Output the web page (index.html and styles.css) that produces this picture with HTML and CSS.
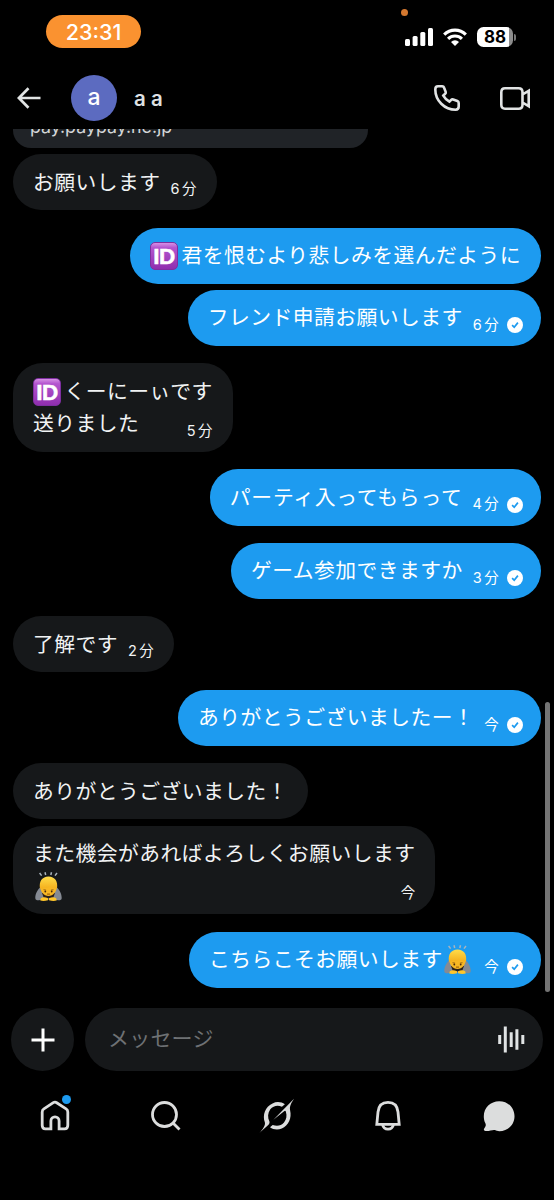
FILE: index.html
```html
<!DOCTYPE html>
<html lang="ja">
<head>
<meta charset="utf-8">
<title>a a</title>
<link rel="stylesheet" href="styles.css">
</head>
<body>
<svg width="0" height="0" class="defs" aria-hidden="true">
  <defs>
    <linearGradient id="hair" x1="0" y1="0" x2="0" y2="1"><stop offset="0" stop-color="#ffdc4a"/><stop offset="1" stop-color="#f5b01d"/></linearGradient>
    <symbol id="check" viewBox="0 0 16 16">
      <circle cx="8" cy="8" r="8" fill="#fff"/>
      <path d="M5.1 8.2 7.2 10.2 10.9 5.6" fill="none" stroke="#1d9bf0" stroke-width="1.7"/>
    </symbol>
    <symbol id="bow" viewBox="0 0 27 30">
      <path d="M4.600 1 6.600 3.600M10 .2 10.700 3M16.500 .2 15.800 3M22 1 20 3.600" stroke="#a9b4bd" stroke-width="1.500" fill="none"/>
      <path d="M6.500 14.500C2.500 17 .300 22 .300 26c0 2 1.500 2.400 3.500 2.300l5-.8h9.400l5 .8c2 .1 3.500-.3 3.500-2.300 0-4-2.200-9-6.200-11.500z" fill="#858a93"/>
      <path d="M7 21h13l-2 5.500H9z" fill="#2d2118"/>
      <path d="M5.200 13.500h16.600c.3 6.300-3.600 10.500-8.300 10.500s-8.600-4.200-8.300-10.500z" fill="#f8b723"/>
      <path d="M5 16.500C3.800 9.500 7.200 4.600 13.500 4.600s9.700 4.900 8.500 11.900c-3 0-5.700-.4-7.200-1.700-2 1.300-6 1.800-9.800 1.700z" fill="url(#hair)"/>
      <path d="M8.500 17.700l2.600.4M18.500 17.700l-2.600.4" stroke="#8a5512" stroke-width=".8"/>
      <circle cx="10.300" cy="19.500" r=".9" fill="#4b2b0b"/><circle cx="16.700" cy="19.500" r=".9" fill="#4b2b0b"/>
      <path d="M12 22.100h3" stroke="#7b3f08" stroke-width=".8"/>
      <path d="M5.800 26.200q3-2 7.200 0v2.100q-4 1-7.700.3zM21.200 26.200q-3-2-7.200 0v2.100q4 1 7.700.3z" fill="#ffc62c"/>
    </symbol>
  </defs>
</svg>
<div class="phone">
  <div class="status">
    <div class="clock">23:31</div>
    <span class="mic-dot"></span>
    <div class="indicators">
      <svg class="signal" viewBox="0 0 28 18"><g fill="#fff"><rect x="0" y="11" width="5" height="7" rx="1.500"/><rect x="7.600" y="8" width="5" height="10" rx="1.500"/><rect x="15.300" y="4" width="5" height="14" rx="1.500"/><rect x="23" y="0" width="5" height="18" rx="1.500"/></g></svg>
      <svg class="wifi" viewBox="0 0 24 18"><g fill="none" stroke="#fff" stroke-width="3.200"><path d="M1.200 6.600a15.400 15.400 0 0 1 21.600 0"/><path d="M5.100 10.800a9.900 9.900 0 0 1 13.800 0"/></g><path d="M8 13.900a5.800 5.800 0 0 1 8 0l-4 4z" fill="#fff"/></svg>
      <div class="battery"><span>88</span></div>
      <i class="battery-tip"></i>
    </div>
  </div>
  <header class="header">
    <svg class="back" viewBox="0 0 24 22"><path d="M11.500 1.200 1.900 11l9.600 9.800M2 11h21.500" fill="none" stroke="#e1e4e4" stroke-width="2.700"/></svg>
    <div class="avatar">a</div>
    <h1 class="name">a a</h1>
    <svg class="call" viewBox="0 0 26 26"><path d="M4 1.300H8.200Q9.600 1.300 10 2.500L11.700 6.900Q12.100 8 11.200 8.800L9.300 10.600Q11.500 14.500 15.400 16.700L17.200 14.900Q18 14.100 19.200 14.500L23.400 16Q24.700 16.500 24.700 17.900V21.600Q24.700 24.700 21.600 24.700C10.500 24.700 1.300 15.500 1.300 4.400Q1.300 1.300 4 1.300Z" fill="none" stroke="#e1e3e4" stroke-width="2.600"/></svg>
    <svg class="video" viewBox="0 0 30 23"><path d="M5 1.300h13.600q3.900 0 3.900 3.900v12.600q0 3.900-3.900 3.900H5q-3.700 0-3.700-3.900V5.200Q1.300 1.300 5 1.300zM22.500 7.500l6.200-3.700v15.400l-6.200-3.700" fill="none" stroke="#e1e3e4" stroke-width="2.600"/></svg>
  </header>
  <main class="chat">
    <div class="card">pay.paypay.ne.jp</div>
    <div class="msg in near"><span>お願いします</span><time>6 分</time></div>
    <div class="msg out"><i class="id">ID</i><span>君を恨むより悲しみを選んだように</span></div>
    <div class="msg out near"><span>フレンド申請お願いします</span><time>6 分</time><svg class="check"><use href="#check"/></svg></div>
    <div class="msg in double">
      <div class="line"><i class="id">ID</i><span>くーにーぃです</span></div>
      <div class="line last"><span>送りました</span><time>5 分</time></div>
    </div>
    <div class="msg out"><span class="loose">パーティ入ってもらって</span><time>4 分</time><svg class="check"><use href="#check"/></svg></div>
    <div class="msg out"><span>ゲーム参加できますか</span><time>3 分</time><svg class="check"><use href="#check"/></svg></div>
    <div class="msg in"><span>了解です</span><time>2 分</time></div>
    <div class="msg out"><span>ありがとうございましたー！</span><time>今</time><svg class="check"><use href="#check"/></svg></div>
    <div class="msg in"><span>ありがとうございました！</span></div>
    <div class="msg in near double">
      <div class="line"><span>また機会があればよろしくお願いします</span></div>
      <div class="line last"><svg class="bow"><use href="#bow"/></svg><time>今</time></div>
    </div>
    <div class="msg out"><span>こちらこそお願いします</span><svg class="bow"><use href="#bow"/></svg><time>今</time><svg class="check"><use href="#check"/></svg></div>
    <div class="scrollbar"></div>
  </main>
  <div class="composer">
    <div class="add"><svg viewBox="0 0 24 24"><path d="M12 .5v23M.5 12h23" stroke="#fff" stroke-width="3"/></svg></div>
    <div class="field"><span>メッセージ</span>
      <svg viewBox="0 0 27 27"><path d="M1.700 9v9M7.300 .5v26M13.200 6.200v14.800M18.900 3.200v20.500M24.800 9v9" stroke="#e0e3e4" stroke-width="3"/></svg>
    </div>
  </div>
  <nav class="nav">
    <div class="tab"><svg viewBox="0 0 36 36"><path d="M5.200 14.100Q5.200 12 6.900 10.900L16.300 4.700Q18 3.600 19.700 4.700L29.100 10.900Q30.800 12 30.800 14.100V27.200Q30.800 30.800 27.600 30.800H22.100V22.900A4.100 4.100 0 0 0 13.900 22.900V30.800H8.400Q5.200 30.800 5.200 27.200Z"/></svg><b class="dot"></b></div>
    <div class="tab"><svg viewBox="0 0 36 36"><circle cx="16.500" cy="16.500" r="12"/><path d="M25 25 31.500 31.500"/></svg></div>
    <div class="tab"><svg class="solid" viewBox="0 0 36 36"><path d="M.500 34.800C4 31 6.500 27.500 5.900 24.500 3.200 17 6.200 8.500 13.500 5.400 18 3.200 22.500 4 25.900 6.300L22.900 8.700C18.500 6.500 14.200 7.900 11.300 11.300 8.700 15 8.400 19.300 10.500 23.800 10.900 25.800 9.400 27 7.900 28.300Z"/><path d="M14.400 21.700 35 .700C31.500 6 30.500 9 31.100 12.200 33 20 29.500 27.700 22.800 30.500 18.700 32.200 14 31.600 11 29.200L13.700 26.900C18 28.500 22.100 27.800 25 24.500 27.500 21.500 28.100 17.700 26.900 13.800 26.500 12.500 25.900 12.500 24.800 13.500Z"/></svg></div>
    <div class="tab"><svg viewBox="0 0 36 36"><path d="M6.800 26.400 8 14C8.600 7.700 12.500 4.300 18 4.300S27.400 7.700 28 14L29.200 26.400Z"/><path d="M12.500 26.500q1 4.700 5.500 4.700t5.500-4.700"/></svg></div>
    <div class="tab"><svg class="solid" viewBox="0 0 36 36"><path d="M18.200 3.200C27 3.200 33.500 9.800 33.500 18.200S27 33.200 18.300 33.200C16.600 33.200 15.200 32.900 14 32.100 11.500 31.300 6 34.300 3.300 32.400 2.300 31.600 3.100 30.500 4 29.300 5.300 27.500 4.800 26.100 4 24.500 3.200 22.700 2.800 20.500 2.800 18.200 2.800 9.800 9.500 3.200 18.200 3.200Z"/></svg></div>
  </nav>
</div>
</body>
</html>
```
FILE: styles.css
```css
* { box-sizing: border-box; }
body { margin: 0; background: #000; color: #f1f3f4; font-family: Inter, "Noto Sans CJK JP", sans-serif; }
svg { display: block; flex: none; }
.defs { position: absolute; }
.phone { width: 554px; height: 1200px; display: flex; flex-direction: column; overflow: hidden; }

.status { height: 66px; position: relative; display: flex; justify-content: space-between; align-items: flex-start; padding: 15px 38px 0 46px; }
.clock { width: 95px; height: 33px; border-radius: 17px; background: #fa9230; color: #fff; font-size: 21.500px; font-weight: 500; line-height: 34px; text-align: center; }
.mic-dot { position: absolute; left: 401px; top: 9px; width: 7px; height: 7px; border-radius: 50%; background: #d4782f; }
.indicators { display: flex; align-items: center; padding-top: 12px; }
.signal { width: 28px; height: 18px; }
.wifi { width: 24px; height: 18px; margin-left: 10px; }
.battery { width: 36px; height: 20px; margin-left: 10px; border-radius: 6.500px; background: linear-gradient(90deg, #fff 88%, #8c8c8c 88%); color: #000; font-size: 17px; font-weight: 700; line-height: 20px; text-align: center; }
.battery-tip { width: 2px; height: 7px; margin-left: 1px; border-radius: 0 3px 3px 0; background: #777; }

.header { height: 63px; flex: none; display: flex; align-items: center; padding: 1px 24px 0 17px; }
.back { width: 24px; height: 22px; }
.avatar { width: 46px; height: 46px; margin-left: 30px; border-radius: 50%; background: #5c6bc0; color: #fff; font-size: 23px; font-weight: 500; line-height: 44px; text-align: center; }
.name { margin: 1px auto 0 17px; font-size: 20.500px; font-weight: 600; line-height: 30px; color: #dfe1e3; }
.call { width: 26px; height: 26px; margin-right: 40px; }
.video { width: 30px; height: 23px; }

.chat { position: relative; height: 879px; flex: none; display: flex; flex-direction: column; justify-content: flex-end; overflow: hidden; padding: 0 13px 20.300px; }
.card { align-self: flex-start; flex: none; width: 355px; height: 60px; border-radius: 0 0 18px 18px; background: #202327; color: #d3d6d8; font-size: 17.800px; line-height: 22px; padding: 28.500px 17px 0; }
.msg { flex: none; min-height: 56.100px; margin-top: 17.400px; padding: 1.500px 20px 0; border-radius: 28px; display: flex; align-items: center; font-size: 20.800px; letter-spacing: .45px; line-height: 32.500px; white-space: nowrap; }
.msg.near { margin-top: 6.200px; }
.in { align-self: flex-start; background: #16181a; }
.out { align-self: flex-end; background: #1d9bf0; color: #fff; }
.double { height: 88.600px; flex-direction: column; align-items: stretch; padding-top: 12.500px; border-radius: 30px; }
.line { height: 32.500px; display: flex; align-items: center; }
.last { justify-content: space-between; }
.loose { letter-spacing: .75px; }
time { margin-left: 10px; padding-top: 12.500px; font-size: 14.500px; line-height: 20px; letter-spacing: .2px; word-spacing: -2px; }
.check { width: 16px; height: 16px; margin: 13px -2px 0 8px; }
.id { width: 28px; height: 28px; margin: 0 3.500px 0 0; border: 1px solid #7e2fa0; border-radius: 5px; background: linear-gradient(#d690e4, #b455cf 18%, #8f2eae); color: #fff; font: 700 22.500px/27px "Liberation Sans", sans-serif; letter-spacing: -.5px; text-align: center; -webkit-text-stroke: .5px #fff; }
.bow { width: 27px; height: 30px; margin: 0 3px 0 1.500px; }
.scrollbar { position: absolute; left: 545px; top: 573px; width: 5px; height: 290px; border-radius: 3px; background: #747474; }

.composer { height: 63px; flex: none; display: flex; gap: 11px; padding: 0 11px; }
.add { width: 63px; height: 63px; border-radius: 50%; background: #16181a; display: grid; place-items: center; }
.add svg { width: 24px; height: 24px; }
.field { flex: 1; border-radius: 32px; background: #16181a; color: #6e7174; display: flex; align-items: center; justify-content: space-between; padding: 0 18px 0 23px; font-size: 21px; letter-spacing: .2px; }
.field span { padding-bottom: 5px; }
.field svg { width: 27px; height: 27px; }

.nav { height: 129px; display: flex; padding-top: 27px; }
.tab { flex: 1; position: relative; display: flex; justify-content: center; align-items: flex-start; }
.tab svg { width: 36px; height: 36px; fill: none; stroke: #dcdddd; stroke-width: 2.800px; }
.tab svg.solid { fill: #dcdddd; stroke: none; }
.dot { position: absolute; left: 62px; top: -3px; width: 9px; height: 9px; border-radius: 50%; background: #1d9bf0; }
```
